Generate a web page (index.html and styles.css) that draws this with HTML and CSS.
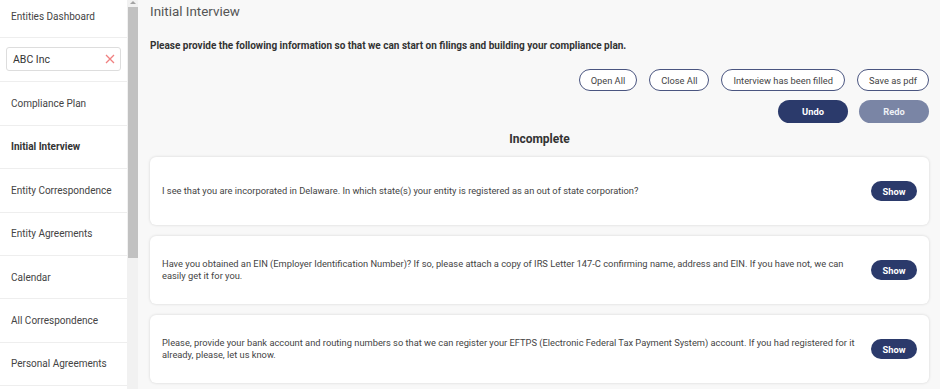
FILE: index.html
```html
<!DOCTYPE html>
<html lang="en">
<head>
    <meta charset="UTF-8">
    <meta name="viewport" content="width=device-width, initial-scale=1.0">
    <title>Initial Interview</title>
    <link rel="stylesheet" href="styles.css">
</head>
<body>
    <div class="layout">
        <nav class="sidebar">
            <div class="nav-item">Entities Dashboard</div>
            <div class="nav-search">
                <div class="search-box">
                    <span>ABC Inc</span>
                    <svg class="clear-icon" width="10" height="10" viewBox="0 0 10 10">
                        <path d="M1 1 L9 9 M9 1 L1 9" stroke="#f08080" stroke-width="1.3" fill="none"/>
                    </svg>
                </div>
            </div>
            <div class="nav-item">Compliance Plan</div>
            <div class="nav-item active">Initial Interview</div>
            <div class="nav-item">Entity Correspondence</div>
            <div class="nav-item">Entity Agreements</div>
            <div class="nav-item">Calendar</div>
            <div class="nav-item">All Correspondence</div>
            <div class="nav-item">Personal Agreements</div>
        </nav>

        <div class="scroll-track">
            <div class="scroll-arrow"></div>
            <div class="scroll-thumb"></div>
        </div>

        <main class="content">
            <h2 class="page-title">Initial Interview</h2>
            <p class="intro">Please provide the following information so that we can start on filings and building your compliance plan.</p>

            <div class="actions">
                <button class="btn-outline">Open All</button>
                <button class="btn-outline">Close All</button>
                <button class="btn-outline">Interview has been filled</button>
                <button class="btn-outline">Save as pdf</button>
            </div>
            <div class="actions history">
                <button class="btn-solid">Undo</button>
                <button class="btn-solid disabled">Redo</button>
            </div>

            <h3 class="section-title">Incomplete</h3>

            <div class="question-list">
                <div class="question">
                    <p>I see that you are incorporated in Delaware. In which state(s) your entity is registered as an out of state corporation?</p>
                    <button class="btn-show">Show</button>
                </div>
                <div class="question">
                    <p>Have you obtained an EIN (Employer Identification Number)? If so, please attach a copy of IRS Letter 147-C confirming name, address and EIN. If you have not, we can easily get it for you.</p>
                    <button class="btn-show">Show</button>
                </div>
                <div class="question">
                    <p>Please, provide your bank account and routing numbers so that we can register your EFTPS (Electronic Federal Tax Payment System) account. If you had registered for it already, please, let us know.</p>
                    <button class="btn-show">Show</button>
                </div>
            </div>
        </main>
    </div>
</body>
</html>
```

FILE: styles.css
```css
* {
    box-sizing: border-box;
}

html, body {
    height: 100%;
    margin: 0;
    padding: 0;
    font-family: Roboto, 'Liberation Sans', sans-serif;
    background-color: #f8f8f8;
    overflow: hidden;
}

.layout {
    display: flex;
    height: 100%;
}

/* Sidebar */
.sidebar {
    width: 127px;
    flex-shrink: 0;
    background-color: white;
    margin-top: -5px;
}

.nav-item {
    height: 43.4px;
    display: flex;
    align-items: center;
    padding-left: 11px;
    font-size: 10px;
    color: #444;
    border-bottom: 1px solid #eee;
}

.nav-item.active {
    font-weight: 700;
    color: #333;
}

.nav-search {
    height: 44px;
    padding: 9px 6px 0;
    border-bottom: 1px solid #eee;
}

.search-box {
    height: 24px;
    border: 1px solid #ddd;
    border-radius: 3px;
    display: flex;
    align-items: center;
    justify-content: space-between;
    padding: 0 5px 0 6px;
    font-size: 10.5px;
    color: #333;
}

/* Fake scrollbar */
.scroll-track {
    width: 11px;
    flex-shrink: 0;
    background-color: #f1f1f1;
    display: flex;
    flex-direction: column;
    align-items: center;
}

.scroll-arrow {
    width: 0;
    height: 0;
    margin-top: 1px;
    border-left: 3px solid transparent;
    border-right: 3px solid transparent;
    border-bottom: 3px solid #a3a3a3;
}

.scroll-thumb {
    width: 10px;
    height: 251px;
    margin-top: 3px;
    background-color: #c1c1c1;
}

/* Main content */
.content {
    flex: 1;
    padding: 3px 11px 0 12px;
    color: #333;
}

.page-title {
    margin: 0;
    font-size: 13.4px;
    font-weight: 400;
    line-height: 18px;
    color: #555;
}

.intro {
    margin: 17px 0 0;
    font-size: 10px;
    font-weight: 700;
    line-height: 16px;
    color: #333;
}

.actions {
    display: flex;
    justify-content: flex-end;
    gap: 12px;
    margin-top: 15px;
}

.actions.history {
    margin-top: 9px;
    gap: 11px;
}

button {
    font-family: inherit;
    cursor: pointer;
}

.btn-outline {
    height: 22px;
    padding: 0 11px;
    border: 1px solid #4a5580;
    border-radius: 12px;
    background-color: white;
    font-size: 9.3px;
    color: #444;
}

.btn-solid {
    width: 70px;
    height: 23px;
    border: none;
    border-radius: 12px;
    background-color: #2b3a6b;
    color: white;
    font-size: 9.3px;
    font-weight: 700;
}

.btn-solid.disabled {
    background-color: #7a85a5;
    color: #eef0f5;
}

.section-title {
    margin: 8px 0 0;
    text-align: center;
    font-size: 12px;
    font-weight: 700;
    line-height: 16px;
    color: #333;
}

.question-list {
    display: flex;
    flex-direction: column;
    gap: 11px;
    margin-top: 10px;
}

.question {
    min-height: 68px;
    display: flex;
    align-items: center;
    justify-content: space-between;
    gap: 12px;
    padding: 0 12px;
    background-color: white;
    border-radius: 6px;
    box-shadow: 0 0 3px rgba(0, 0, 0, 0.15);
}

.question p {
    margin: 0;
    font-size: 9.3px;
    line-height: 12px;
    color: #444;
}

.btn-show {
    flex-shrink: 0;
    width: 46px;
    height: 20px;
    border: none;
    border-radius: 10px;
    background-color: #2b3a6b;
    color: white;
    font-size: 9.3px;
    font-weight: 700;
}
```
